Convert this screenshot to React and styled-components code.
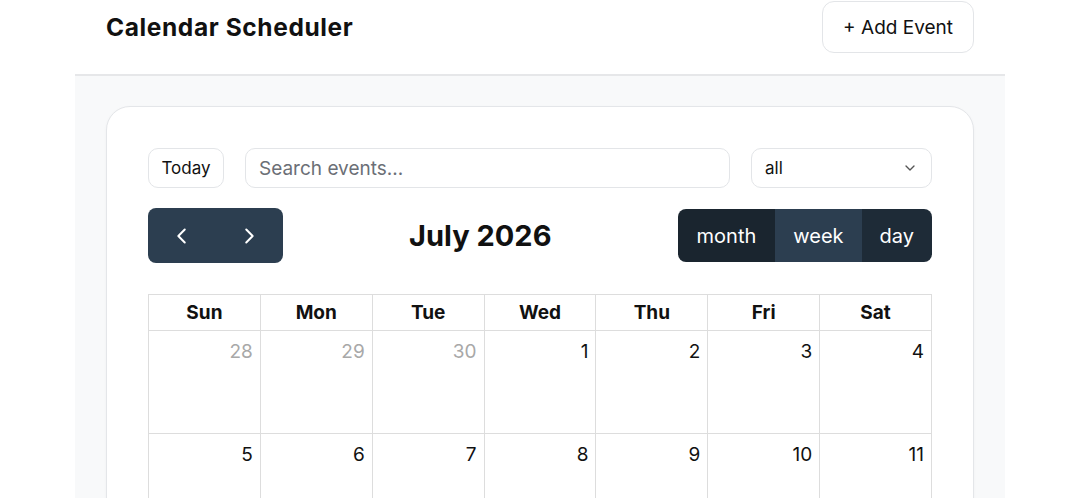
import React from "react";
import styled, { createGlobalStyle } from "styled-components";

const GlobalStyle = createGlobalStyle`
  html, body { margin: 0; padding: 0; background: #ffffff; }
  body { font-family: Inter, "Liberation Sans", Arial, sans-serif; color: #111111; }
  * { box-sizing: border-box; }
`;

const Page = styled.div`
  width: 930px;
  margin: 0 auto;
  display: flex;
  flex-direction: column;
`;

const Header = styled.header`
  display: flex;
  align-items: center;
  justify-content: space-between;
  padding: 1px 31px 21px;
  background: #ffffff;
  border-bottom: 2px solid #e6e7e9;
`;

const Title = styled.h1`
  margin: 0;
  font-size: 24.5px;
  font-weight: 700;
  letter-spacing: 0.6px;
  color: #111111;
`;

const AddButton = styled.button`
  height: 52px;
  padding: 0 20px;
  border: 1px solid #e3e5e8;
  border-radius: 12px;
  background: #ffffff;
  font-family: inherit;
  font-size: 19px;
  color: #111111;
`;

const Main = styled.main`
  background: #f8f9fa;
  padding: 30px 31px 40px;
`;

const Card = styled.section`
  background: #ffffff;
  border: 1px solid #e4e6e9;
  border-radius: 24px;
  padding: 41px 41px 41px;
  box-shadow: 0 1px 3px rgba(0, 0, 0, 0.04);
`;

const Toolbar = styled.div`
  display: flex;
  align-items: center;
  gap: 21px;
  height: 40px;
`;

const OutlineButton = styled.button`
  height: 40px;
  width: 76px;
  border: 1px solid #e3e5e8;
  border-radius: 10px;
  background: #ffffff;
  font-family: inherit;
  font-size: 17px;
  color: #111111;
`;

const SearchInput = styled.input`
  flex: 1;
  height: 40px;
  border: 1px solid #e3e5e8;
  border-radius: 10px;
  padding: 0 13px;
  font-family: inherit;
  font-size: 19px;
  color: #111111;
  &::placeholder { color: #6b6f76; }
`;

const SelectBox = styled.div`
  width: 181px;
  height: 40px;
  border: 1px solid #e3e5e8;
  border-radius: 10px;
  display: flex;
  align-items: center;
  justify-content: space-between;
  padding: 0 13px 0 13px;
  font-size: 17px;
  color: #111111;
`;

const NavRow = styled.div`
  display: flex;
  align-items: center;
  justify-content: space-between;
  margin-top: 20px;
  height: 55px;
`;

const ButtonGroup = styled.div`
  display: flex;
  border-radius: 8px;
  overflow: hidden;
  height: ${(p) => p.$h}px;
`;

const NavButton = styled.button`
  width: 67.5px;
  height: 100%;
  border: none;
  background: #2c3e50;
  display: flex;
  align-items: center;
  justify-content: center;
  padding: 0;
`;

const MonthTitle = styled.h2`
  margin: 0;
  font-size: 29px;
  font-weight: 700;
  color: #111111;
`;

const ViewButton = styled.button`
  height: 100%;
  border: none;
  padding: 0 ${(p) => p.$pad}px;
  font-family: inherit;
  font-size: 20px;
  color: #ffffff;
  background: ${(p) => p.$bg};
`;

const Grid = styled.div`
  margin-top: 31px;
  display: grid;
  grid-template-columns: repeat(7, 1fr);
  border-left: 1px solid #dddddd;
  border-top: 1px solid #dddddd;
`;

const HeadCell = styled.div`
  height: 36px;
  border-right: 1px solid #dddddd;
  border-bottom: 1px solid #dddddd;
  display: flex;
  align-items: center;
  justify-content: center;
  font-weight: 700;
  font-size: 19px;
`;

const DayCell = styled.div`
  height: 103px;
  border-right: 1px solid #dddddd;
  border-bottom: 1px solid #dddddd;
  padding: 9px 7px 0;
  display: flex;
  justify-content: flex-end;
  align-items: flex-start;
  font-size: 19px;
  color: ${(p) => (p.$other ? "#a8a8a8" : "#111111")};
`;

const Chevron = ({ dir }) => (
  <svg width="22" height="22" viewBox="0 0 24 24" fill="none" stroke="#ffffff" strokeWidth="2.2" strokeLinecap="round" strokeLinejoin="round">
    {dir === "left" ? <path d="M15 5l-7 7 7 7" /> : <path d="M9 5l7 7-7 7" />}
  </svg>
);

const days = ["Sun", "Mon", "Tue", "Wed", "Thu", "Fri", "Sat"];

const cells = [];
[28, 29, 30].forEach((d) => cells.push({ d, other: true }));
for (let d = 1; d <= 31; d++) cells.push({ d, other: false });
cells.push({ d: 1, other: true });

export default function App() {
  return (
    <>
      <GlobalStyle />
      <Page>
        <Header>
          <Title>Calendar Scheduler</Title>
          <AddButton>+ Add Event</AddButton>
        </Header>
        <Main>
          <Card>
            <Toolbar>
              <OutlineButton>Today</OutlineButton>
              <SearchInput placeholder="Search events..." />
              <SelectBox>
                <span>all</span>
                <svg width="16" height="16" viewBox="0 0 24 24" fill="none" stroke="#555" strokeWidth="2" strokeLinecap="round" strokeLinejoin="round">
                  <path d="M6 9l6 6 6-6" />
                </svg>
              </SelectBox>
            </Toolbar>
            <NavRow>
              <ButtonGroup $h={55}>
                <NavButton aria-label="prev"><Chevron dir="left" /></NavButton>
                <NavButton aria-label="next"><Chevron dir="right" /></NavButton>
              </ButtonGroup>
              <MonthTitle>July 2026</MonthTitle>
              <ButtonGroup $h={53}>
                <ViewButton $bg="#1a252f" $pad={19}>month</ViewButton>
                <ViewButton $bg="#2c3e50" $pad={18}>week</ViewButton>
                <ViewButton $bg="#1e2b37" $pad={18}>day</ViewButton>
              </ButtonGroup>
            </NavRow>
            <Grid>
              {days.map((d) => (
                <HeadCell key={d}>{d}</HeadCell>
              ))}
              {cells.map((c, i) => (
                <DayCell key={i} $other={c.other}>{c.d}</DayCell>
              ))}
            </Grid>
          </Card>
        </Main>
      </Page>
    </>
  );
}
